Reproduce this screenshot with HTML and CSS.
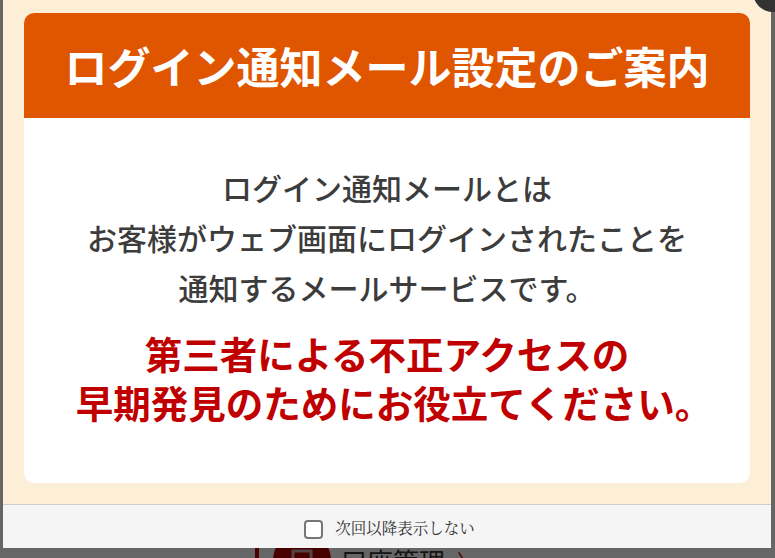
FILE: index.html
```html
<!DOCTYPE html>
<html lang="ja">
<head>
<meta charset="utf-8">
<title>ログイン通知メール設定のご案内</title>
<link rel="stylesheet" href="styles.css">
</head>
<body>
<div class="page">
  <div class="page-row">
    <span class="page-bar"></span>
    <span class="page-icon">
      <svg width="30" height="30" viewBox="0 0 30 30"><rect x="6" y="6" width="18" height="18" fill="none" stroke="#caa" stroke-width="3"/></svg>
    </span>
    <span class="page-link">口座管理</span>
    <span class="page-arrow">〉</span>
  </div>
  <div class="overlay"></div>
</div>

<div class="modal">
  <div class="modal-body">
    <div class="card">
      <div class="card-head">
        <h1 class="title">ログイン通知メール設定のご案内</h1>
      </div>
      <div class="card-content">
        <p class="desc">ログイン通知メールとは<br>お客様がウェブ画面にログインされたことを<br>通知するメールサービスです。</p>
        <div class="note">
          <div class="note-line">第三者による不正アクセスの</div>
          <div class="note-line note-line-2">早期発見のためにお役立てください。</div>
        </div>
      </div>
    </div>
  </div>
  <div class="modal-foot">
    <label class="check">
      <span class="box"></span>
      <span class="check-text">次回以降表示しない</span>
    </label>
  </div>
</div>
<div class="close"></div>
</body>
</html>
```

FILE: styles.css
```css
html, body {
  margin: 0;
  padding: 0;
}
body {
  width: 775px;
  height: 558px;
  overflow: hidden;
  position: relative;
  background: #ffffff;
  font-family: "Noto Sans CJK JP", "Noto Sans", sans-serif;
}
.page {
  position: relative;
  width: 775px;
  height: 558px;
  display: flex;
  flex-direction: column;
  justify-content: flex-end;
}
.page-row {
  display: flex;
  align-items: center;
  height: 40px;
  margin-bottom: -22px;
  padding-left: 255px;
}
.page-bar {
  width: 4px;
  height: 40px;
  background: #c00000;
  margin-right: 14px;
}
.page-icon {
  width: 58px;
  height: 58px;
  border-radius: 50%;
  background: #b00000;
  display: flex;
  align-items: center;
  justify-content: center;
  margin-right: 10px;
}
.page-link {
  font-size: 26px;
  color: #333;
}
.page-arrow {
  font-size: 20px;
  color: #c00000;
  margin-left: 12px;
}
.overlay {
  position: absolute;
  inset: 0;
  background: rgba(0, 0, 0, 0.6);
}
.modal {
  position: absolute;
  left: 3px;
  top: 0;
  width: 768px;
  background: #fdeed8;
}
.modal-body {
  padding: 13px 21px 21px;
}
.card {
  background: #ffffff;
  border-radius: 10px;
  overflow: hidden;
}
.card-head {
  background: #e05500;
  height: 105px;
  display: flex;
  align-items: center;
  justify-content: center;
}
.title {
  margin: 0;
  color: #ffffff;
  font-size: 43px;
  font-weight: 700;
  line-height: 1;
}
.card-content {
  padding: 44px 0 57px;
  text-align: center;
}
.desc {
  margin: 0;
  font-size: 30px;
  line-height: 50px;
  color: #3c3c3c;
  font-weight: 500;
}
.note {
  margin-top: 16px;
  font-size: 37.5px;
  color: #c00000;
  font-weight: 700;
}
.note-line {
  height: 49px;
  line-height: 49px;
}
.note-line-2 {
  padding-left: 14px;
}
.modal-foot {
  border-top: 1px solid #cccccc;
  background: #f5f5f5;
  height: 43px;
  display: flex;
  align-items: center;
  justify-content: center;
}
.check {
  display: flex;
  align-items: center;
  gap: 12px;
  margin-top: 1px;
  padding-left: 5px;
}
.box {
  width: 15px;
  height: 15px;
  border: 2px solid #767676;
  border-radius: 4px;
  background: #ffffff;
  margin-top: 4px;
}
.check-text {
  font-family: "Noto Serif CJK JP", "Liberation Serif", serif;
  font-size: 15.5px;
  color: #333333;
}
.close {
  position: absolute;
  left: 753px;
  top: -28px;
  width: 40px;
  height: 40px;
  border-radius: 50%;
  background: #333333;
}
```
